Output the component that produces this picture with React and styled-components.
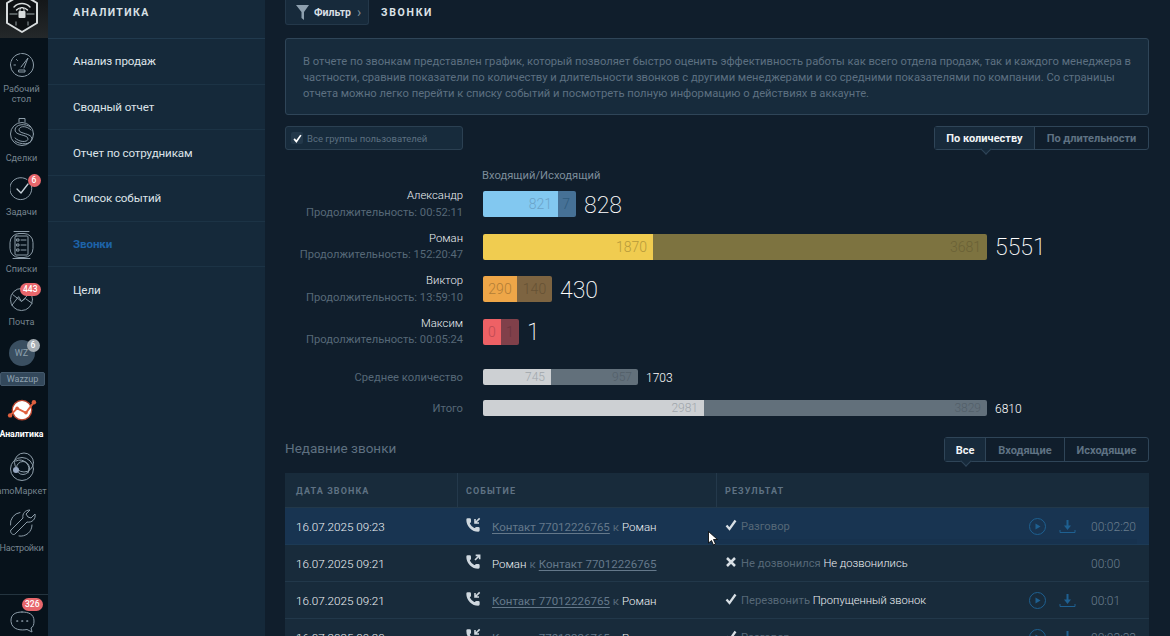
import React from 'react';
import styled, { createGlobalStyle } from 'styled-components';

const Global = createGlobalStyle`
  html, body { margin: 0; padding: 0; height: 636px; overflow: hidden; background: #101e2c; }
  body { font-family: Roboto, "Noto Sans", sans-serif; -webkit-font-smoothing: antialiased; }
  * { box-sizing: border-box; }
`;

const Page = styled.div`
  display: flex; width: 1170px; height: 636px; overflow: hidden; position: relative;
`;
const Rail = styled.nav`
  width: 48px; flex: none; background: #07121b; display: flex; flex-direction: column; height: 636px;
`;
const LogoBox = styled.div`
  height: 38px; background: linear-gradient(#141719, #24282a); display: flex; justify-content: center; align-items: flex-end;
  overflow: hidden; padding: 0 5px 2px 0;
`;
const RailItem = styled.div`
  height: ${p => p.$h}px; padding: ${p => p.$top ?? 12}px 5px 0 0; display: flex; flex-direction: column; align-items: center;
  position: relative;
`;
const RailIcon = styled.div`
  width: 30px; height: 30px; position: relative; color: #8d9da9; display: flex; align-items: center; justify-content: center; flex: none;
`;
const RailLabel = styled.div`
  font-size: ${p => p.$active ? 8.7 : 9.1}px; line-height: ${p => p.$lh || 11}px; margin-top: ${p => p.$gap || 5}px; text-align: center; white-space: nowrap;
  letter-spacing: ${p => p.$tight ? -0.25 : 0}px;
  color: ${p => p.$active ? '#ffffff' : '#76848f'}; font-weight: ${p => p.$active ? 700 : 400};
`;
const Badge = styled.span`
  position: absolute; top: ${p => p.$top ?? -5}px; right: ${p => p.$right ?? -4}px; height: 13px; min-width: 13px; padding: 0 3px;
  border-radius: 7px; background: ${p => p.$grey ? '#a5adb3' : '#e8676c'}; color: #fff; font-size: 8.5px; line-height: 13px; text-align: center; font-weight: 500;
`;
const Avatar = styled.div`
  width: 26px; height: 26px; border-radius: 50%; background: #3a4f61; color: #8da0ae; font-size: 9px; display: flex; align-items: center; justify-content: center;
`;
const TagLabel = styled.div`
  width: 45px; height: 14px; margin-top: 4px; border: 1px solid #44596c; border-radius: 2px; background: #33485b; color: #8ea0af;
  font-size: 9px; line-height: 12px; text-align: center; align-self: flex-start;
`;
const RailFoot = styled.div`
  margin-top: auto; border-top: 1px solid #24343f; height: 42px; display: flex; justify-content: center; padding: 12px 5px 0 0;
`;

const Menu = styled.aside`
  width: 217px; flex: none; background: #15293a; display: flex; flex-direction: column; height: 636px;
`;
const MenuHead = styled.div`
  height: 39px; padding: 0 25px 14px; display: flex; align-items: center; color: #d9e0e5; font-size: 10.5px; font-weight: 700; letter-spacing: 1.4px;
  border-bottom: 1px solid #213a4e;
`;
const MenuItem = styled.div`
  height: 45.7px; padding: 0 25px; display: flex; align-items: center; font-size: 11.6px; letter-spacing: -0.12px;
  color: ${p => p.$active ? '#1d63a8' : '#dde3e8'}; font-weight: ${p => p.$active ? 700 : 400};
  border-bottom: ${p => p.$last ? 'none' : '1px solid #1c3345'};
`;

const Main = styled.main`
  flex: 1; min-width: 0; background: #101e2c; padding: 0 21px 0 20px; height: 636px; overflow: hidden;
`;
const TopBar = styled.div`
  height: 26px; display: flex; align-items: flex-start; gap: 12px; margin-bottom: 12px;
`;
const FilterBtn = styled.div`
  width: 84px; height: 25px; background: #172a3b; border: 1px solid #24384a; border-top: none; border-radius: 0 0 3px 3px;
  display: flex; align-items: center; padding-left: 10px; gap: 5px; color: #d8dfe4; font-size: 10.5px; font-weight: 700;
`;
const Chevron = styled.span`
  color: #7e8d99; font-weight: 400; font-size: 14px; line-height: 14px; margin-left: 1px;
`;
const PageTitle = styled.h1`
  margin: 0; font-size: 10.5px; font-weight: 700; letter-spacing: 1.7px; color: #dde3e8; line-height: 25px;
`;
const Info = styled.div`
  height: 77px; background: #172b3c; border: 1px solid #2f4558; border-radius: 3px; padding: 15px 17px;
  color: #5d7081; font-size: 11.2px; line-height: 16px; white-space: nowrap;
`;
const ToolRow = styled.div`
  display: flex; justify-content: space-between; align-items: flex-start; margin-top: 11px; height: 24px;
`;
const CheckField = styled.label`
  width: 178px; height: 24px; background: #172b3c; border: 1px solid #2b4052; border-radius: 3px; display: flex; align-items: center;
  padding-left: 5px; gap: 4px; color: #5d7081; font-size: 9.5px;
`;
const CheckMark = styled.span`
  width: 12px; height: 12px; display: flex; align-items: center; justify-content: center; background: #23384a; border-radius: 2px; color: #fff;
`;
const Seg = styled.div`
  display: flex; height: ${p => p.$h}px; border: 1px solid #2f4558; border-radius: 3px;
`;
const SegBtn = styled.div`
  position: relative; width: ${p => p.$w}px; display: flex; align-items: center; justify-content: center; font-size: 11px; font-weight: 700; padding-top: 1px;
  color: ${p => p.$active ? '#f1f4f6' : '#5f7283'}; background: ${p => p.$active ? '#172a3b' : 'transparent'};
  &:not(:first-child) { border-left: 1px solid #2f4558; }
  ${p => p.$active && `&::after { content: ''; position: absolute; left: 50%; bottom: -4px; width: 7px; height: 7px; margin-left: -3px; background: #172a3b;
    border-right: 1px solid #2f4558; border-bottom: 1px solid #2f4558; transform: rotate(45deg); }`}
`;
const ChartHead = styled.div`
  padding: 19px 0 0 197px; height: 41px; color: #7d8d9a; font-size: 11.2px; line-height: 13px;
`;
const Row = styled.div`
  display: grid; grid-template-columns: 178px 1fr; column-gap: 20px; height: ${p => p.$h}px;
`;
const Who = styled.div`
  text-align: right; line-height: 16px; margin-top: -3px;
`;
const Name = styled.div`
  font-size: 11.3px; color: #eef1f4; font-weight: 300;
`;
const Dur = styled.div`
  font-size: 11.2px; color: #566877; white-space: nowrap; margin-top: 0.5px;
`;
const StatLabel = styled.div`
  text-align: right; font-size: 11.2px; color: #566877; line-height: 16px; padding-top: 1px;
`;
const BarLine = styled.div`
  display: flex; align-items: center; height: ${p => p.$h}px;
`;
const Part = styled.div`
  width: ${p => p.$w}px; height: 100%; background: ${p => p.$bg}; color: ${p => p.$fg};
  font-size: ${p => p.$small ? 12 : 14}px; font-weight: 300; display: flex; align-items: center; justify-content: ${p => p.$center ? 'center' : 'flex-end'};
  padding-right: ${p => p.$center ? 0 : 6}px; border-radius: ${p => p.$r};
  overflow: hidden;
`;
const Total = styled.div`
  margin: 2px 0 0 8px; color: #ffffff; font-weight: ${p => p.$small ? 300 : 200}; font-size: ${p => p.$small ? 12 : 23}px;
`;
const SectionHead = styled.div`
  display: flex; justify-content: space-between; align-items: center; margin-top: 6px; height: 25px;
`;
const SectionTitle = styled.h2`
  margin: 0 0 3px; color: #5e7080; font-weight: 400; font-size: 13.5px;
`;
const Table = styled.div`
  margin-top: 11px; background: #182b3b;
`;
const Grid = styled.div`
  position: relative; display: grid; grid-template-columns: 172px 259px 1fr; align-items: center;
  height: ${p => p.$h}px; background: ${p => p.$hl ? '#183451' : 'transparent'}; border-bottom: 1px solid ${p => p.$hl ? '#1c3a55' : '#22384a'};
`;
const HeadCell = styled.div`
  height: 100%; display: flex; align-items: center; padding: 1px 0 0 11px; color: #5f7283; font-size: 9px; font-weight: 700; letter-spacing: 1.1px;
  &:not(:first-child) { border-left: 1px solid #24394b; padding-left: 8px; }
`;
const DateCell = styled.div`
  padding: 2px 0 0 11px; color: #eef1f4; font-size: 11.7px; font-weight: 300;
`;
const EventCell = styled.div`
  padding: 2px 0 0 8px; display: flex; align-items: center; font-size: 11.5px; color: #56697a;
`;
const CallIcon = styled.span`
  width: 16px; height: 16px; margin-right: 11px; display: flex; color: #cfd8df; margin-top: -4px;
`;
const Lnk = styled.a`
  color: #64788a; text-decoration: underline; text-underline-offset: 2px;
`;
const Who2 = styled.span`
  color: #eef1f4; font-weight: 300;
`;
const Sep = styled.span`
  margin: 0 3px;
`;
const ResultCell = styled.div`
  display: flex; align-items: center; padding-left: 9px; font-size: 11.2px; color: #566877; position: relative; height: 100%;
`;
const Mark = styled.span`
  width: 12px; height: 12px; display: flex; color: #d8dfe5; margin-right: 4px; margin-top: -2px; flex: none;
`;
const ResultText = styled.span`
  margin-top: 0;
`;
const Actions = styled.div`
  margin-left: auto; display: flex; align-items: center; gap: 13px; color: #1e6091; padding: 1px 12px 0 0;
`;
const Time = styled.span`
  width: 46px; color: #6a7d8d; font-size: 12px; margin-left: 2px; font-weight: 300;
`;
const Progress = styled.div`
  position: absolute; left: 0; right: 12px; bottom: 0; height: 5px; background: #17324e;
`;
const Cursor = styled.svg`
  position: absolute; left: 708px; top: 531px; width: 10px; height: 15px;
`;

const stroke = { fill: 'none', stroke: 'currentColor', strokeWidth: 1, strokeLinecap: 'round', strokeLinejoin: 'round' };
const Logo = () => (
  <svg width="34" height="44" viewBox="0 0 34 44" style={{ flex: 'none' }}>
    <path d="M17 2 32 11V31L17 40 2 31V11Z" fill="#0d1013" stroke="#d8dcdd" strokeWidth="2" strokeLinejoin="round" />
    <g fill="none" stroke="#d8dcdd" strokeWidth="1.400" strokeLinecap="round">
      <path d="M9 15a11 11 0 0 1 16 0" />
      <path d="M11.500 18a7.500 7.500 0 0 1 11 0" />
      <path d="M5 22h7M22 22h7M11 33v-3M23 33v-3" stroke="#6d7578" />
    </g>
    <rect x="13.500" y="19" width="7" height="7" rx="1" fill="#d8dcdd" />
    <path d="M15 19v-1.500a2 2 0 0 1 4 0V19" fill="none" stroke="#d8dcdd" />
  </svg>
);
const Gauge = () => <svg width="26" height="26" viewBox="0 0 26 26" {...stroke}><circle cx="13" cy="13" r="11.500" strokeDasharray="12 1.200" /><path d="M12 15 19 6l-4 10" /><rect x="10" y="18" width="6" height="2" /><path d="M5 13h1.500M7.500 7.500l1 1" /></svg>;
const Dollar = () => <svg width="26" height="32" viewBox="0 0 26 32" {...stroke}><path d="M10 5V1.500h6V5" /><circle cx="13" cy="17" r="11.500" /><path d="M21 10c-4-4-15-3-15 3 0 6 13 4 13 9 0 3-8 4-13-1M22 13c-5-5-12-4-12 0 0 4 13 3 13 9 0 6-12 6-17 2" /></svg>;
const CheckCircle = () => <svg width="24" height="24" viewBox="0 0 24 24" {...stroke}><path d="M21.500 9A11 11 0 1 1 17 2.500" /><path d="m7 12 4 4 7-9" stroke="#c5d0d8" strokeWidth="1.300" /></svg>;
const ListIcon = () => <svg width="25" height="30" viewBox="0 0 25 30" {...stroke}><path d="M5 1.500h15M4 28.500h17" /><rect x="1" y="3.500" width="23" height="24" rx="9" /><rect x="6" y="6" width="13" height="19" rx="1" /><path d="M8 9h2v2H8zM8 14h2v2H8zM8 19h2v2H8zM12 10h5M12 15h5M12 20h5" /></svg>;
const MailIcon = () => <svg width="25" height="25" viewBox="0 0 26 26" {...stroke}><circle cx="13" cy="13" r="11.500" /><path d="m3 19 7-9 3 5 4-3 7 5M4 8l9 7 9-9" /></svg>;
const Analytic = () => <svg width="34" height="30" viewBox="0 0 34 30"><circle cx="17" cy="14" r="11" fill="#fff" stroke="#b9452f" strokeWidth="1.500" /><path d="M3.500 20 11.500 12l10 5 9-12" fill="none" stroke="#e0603f" strokeWidth="2.200" /><circle cx="3.500" cy="20" r="2.500" fill="#e0603f" /><circle cx="30.500" cy="5" r="2.500" fill="#e0603f" /><circle cx="11.500" cy="12" r="2" fill="#e0603f" /><circle cx="21.500" cy="17" r="2" fill="#e0603f" /></svg>;
const Market = () => <svg width="26" height="30" viewBox="0 0 26 30" {...stroke}><circle cx="13" cy="17" r="11.500" /><circle cx="15" cy="10.500" r="9.500" /><circle cx="14" cy="16" r="6.500" /><circle cx="7" cy="18" r="3" fill="#97a8c2" stroke="none" /><path d="M7 9a9 9 0 0 1 12 12" /></svg>;
const Wrench = () => <svg width="28" height="28" viewBox="0 0 28 28" {...stroke}><path d="M12 3.500A11 11 0 0 0 2.500 16M24 16a11 11 0 0 1-13 11" /><path d="M3 21 15 9C14 5 17 1 22 1l-4 4 2 3 3 1 4-4c1 5-3 9-8 8L7 25c-2 2-6-2-4-4Z" /></svg>;
const Chat = () => <svg width="26" height="24" viewBox="0 0 26 24" {...stroke}><path d="M13 2c6.500 0 12 2 12 9 0 4-1 6-3 7l1 4-5-2.500c-5 1-15 1-16-8C1.500 4 7 2 13 2Z" /><path d="M8 11h.5M13 11h.5M18 11h.5" strokeWidth="1.700" /></svg>;
const Funnel = () => <svg width="13" height="15" viewBox="0 0 13 15"><path d="M0 0h13L8 7V15L5.500 13V7Z" fill="#8ea0af" /></svg>;
const Tick = ({ s = 12 }) => <svg width={s} height={s} viewBox="0 0 12 12"><path d="M1.500 6.500 4.500 10 10.500 1.500" fill="none" stroke="currentColor" strokeWidth="2.300" /></svg>;
const Cross = () => <svg width="12" height="12" viewBox="0 0 12 12"><path d="M2 2l8 8M10 2l-8 8" fill="none" stroke="currentColor" strokeWidth="2.500" /></svg>;
const phone = 'M13.832 16.568a1 1 0 0 0 1.213-.303l.355-.465A2 2 0 0 1 17 15h3a2 2 0 0 1 2 2v3a2 2 0 0 1-2 2A18 18 0 0 1 2 4a2 2 0 0 1 2-2h3a2 2 0 0 1 2 2v3a2 2 0 0 1-.8 1.600l-.468.351a1 1 0 0 0-.292 1.233 14 14 0 0 0 6.392 6.384';
const CallSvg = ({ out }) => (
  <svg width="16" height="16" viewBox="0 0 24 24">
    <path d={phone} fill="currentColor" />
    {out
      ? <path d="M15 9l7-7M16 2h6v6" fill="none" stroke="currentColor" strokeWidth="2.400" />
      : <path d="M22 2l-7 7M15 3v6h6" fill="none" stroke="currentColor" strokeWidth="2.400" />}
  </svg>
);
const Play = () => <svg width="17" height="17" viewBox="0 0 17 17"><circle cx="8.500" cy="8.500" r="8" fill="none" stroke="currentColor" /><path d="M6.500 5.500v6l5-3Z" fill="currentColor" /></svg>;
const Download = () => <svg width="17" height="15" viewBox="0 0 17 15"><path d="M8.500 1v7" stroke="currentColor" strokeWidth="2" /><path d="M5 6.500h7L8.500 11Z" fill="currentColor" /><path d="M1 11v2.500h15V11" fill="none" stroke="currentColor" /></svg>;

const people = [
  { n: 'Александр', d: '00:52:11', a: [75, '821'], b: [18, '7'], t: '828', c: ['#82c8f0', '#6ba3c9', '#467196', '#2f5b7d'] },
  { n: 'Роман', d: '152:20:47', a: [170, '1870'], b: [334, '3681'], t: '5551', c: ['#f0cc50', '#b79a3b', '#7d7340', '#6a6136'] },
  { n: 'Виктор', d: '13:59:10', a: [34, '290', 1], b: [35, '140', 1], t: '430', c: ['#eea648', '#b27d36', '#7d6441', '#665235'] },
  { n: 'Максим', d: '00:05:24', a: [18, '0', 1], b: [18, '1', 1], t: '1', c: ['#ee6165', '#bd4a52', '#80404a', '#6b353e'] },
];
const stats = [
  { n: 'Среднее количество', a: [68, '745'], b: [87, '957'], t: '1703' },
  { n: 'Итого', a: [221, '2981'], b: [283, '3829'], t: '6810' },
];
const calls = [
  { date: '16.07.2025 09:23', out: false, ok: true, res: 'Разговор', time: '00:02:20', act: true, hl: true },
  { date: '16.07.2025 09:21', out: true, ok: false, res: 'Не дозвонился', extra: 'Не дозвонились', time: '00:00' },
  { date: '16.07.2025 09:21', out: false, ok: true, res: 'Перезвонить', extra: 'Пропущенный звонок', time: '00:01', act: true },
  { date: '16.07.2025 09:20', out: false, ok: true, res: 'Разговор', time: '00:03:33', act: true },
];
const menu = ['Анализ продаж', 'Сводный отчет', 'Отчет по сотрудникам', 'Список событий', 'Звонки', 'Цели'];

export default function App() {
  return (
    <Page>
      <Global />
      <Rail>
        <LogoBox><Logo /></LogoBox>
        <RailItem $h={68}><RailIcon><Gauge /></RailIcon><RailLabel $gap={4} $lh={10}>Рабочий<br />стол</RailLabel></RailItem>
        <RailItem $h={56}><RailIcon><Dollar /></RailIcon><RailLabel $gap={5}>Сделки</RailLabel></RailItem>
        <RailItem $h={56}><RailIcon><CheckCircle /><Badge $top={0} $right={-4}>6</Badge></RailIcon><RailLabel $gap={3}>Задачи</RailLabel></RailItem>
        <RailItem $h={54}><RailIcon><ListIcon /></RailIcon><RailLabel $gap={4}>Списки</RailLabel></RailItem>
        <RailItem $h={53}><RailIcon><MailIcon /><Badge $top={-1} $right={-4}>443</Badge></RailIcon><RailLabel $gap={3}>Почта</RailLabel></RailItem>
        <RailItem $h={59} $top={13}><RailIcon><Avatar>WZ</Avatar><Badge $grey $top={1} $right={-3}>6</Badge></RailIcon><TagLabel>Wazzup</TagLabel></RailItem>
        <RailItem $h={56}><RailIcon><Analytic /></RailIcon><RailLabel $active $gap={3}>Аналитика</RailLabel></RailItem>
        <RailItem $h={56}><RailIcon><Market /></RailIcon><RailLabel $gap={4}>amoМаркет</RailLabel></RailItem>
        <RailItem $h={58}><RailIcon><Wrench /></RailIcon><RailLabel $gap={5} $tight>Настройки</RailLabel></RailItem>
        <RailFoot><RailIcon><Chat /><Badge $top={-9} $right={-6}>326</Badge></RailIcon></RailFoot>
      </Rail>
      <Menu>
        <MenuHead>АНАЛИТИКА</MenuHead>
        {menu.map((m, i) => <MenuItem key={m} $active={m === 'Звонки'} $last={i === menu.length - 1}>{m}</MenuItem>)}
      </Menu>
      <Main>
        <TopBar>
          <FilterBtn><Funnel />Фильтр<Chevron>›</Chevron></FilterBtn>
          <PageTitle>ЗВОНКИ</PageTitle>
        </TopBar>
        <Info>
          В отчете по звонкам представлен график, который позволяет быстро оценить эффективность работы как всего отдела продаж, так и каждого менеджера в<br />
          частности, сравнив показатели по количеству и длительности звонков с другими менеджерами и со средними показателями по компании. Со страницы<br />
          отчета можно легко перейти к списку событий и посмотреть полную информацию о действиях в аккаунте.
        </Info>
        <ToolRow>
          <CheckField><CheckMark><Tick s={9} /></CheckMark>Все группы пользователей</CheckField>
          <Seg $h={24}>
            <SegBtn $w={99} $active>По количеству</SegBtn>
            <SegBtn $w={114}>По длительности</SegBtn>
          </Seg>
        </ToolRow>
        <ChartHead>Входящий/Исходящий</ChartHead>
        {people.map(p => (
          <Row key={p.n} $h={42.500}>
            <Who><Name>{p.n}</Name><Dur>Продолжительность: {p.d}</Dur></Who>
            <BarLine $h={26}>
              <Part $w={p.a[0]} $bg={p.c[0]} $fg={p.c[1]} $center={p.a[2]} $r="2px 0 0 2px">{p.a[1]}</Part>
              <Part $w={p.b[0]} $bg={p.c[2]} $fg={p.c[3]} $center={p.b[2]} $r="0 2px 2px 0">{p.b[1]}</Part>
              <Total>{p.t}</Total>
            </BarLine>
          </Row>
        ))}
        <Row $h={8} />
        {stats.map(s => (
          <Row key={s.n} $h={31}>
            <StatLabel>{s.n}</StatLabel>
            <BarLine $h={16}>
              <Part $small $w={s.a[0]} $bg="#cdd0d3" $fg="#a0a6ab" $r="2px 0 0 2px">{s.a[1]}</Part>
              <Part $small $w={s.b[0]} $bg="#62707b" $fg="#525f69" $r="0 2px 2px 0">{s.b[1]}</Part>
              <Total $small>{s.t}</Total>
            </BarLine>
          </Row>
        ))}
        <SectionHead>
          <SectionTitle>Недавние звонки</SectionTitle>
          <Seg $h={25}>
            <SegBtn $w={40} $active>Все</SegBtn>
            <SegBtn $w={79}>Входящие</SegBtn>
            <SegBtn $w={84}>Исходящие</SegBtn>
          </Seg>
        </SectionHead>
        <Table>
          <Grid $h={35}>
            <HeadCell>ДАТА ЗВОНКА</HeadCell>
            <HeadCell>СОБЫТИЕ</HeadCell>
            <HeadCell>РЕЗУЛЬТАТ</HeadCell>
          </Grid>
          {calls.map((c, i) => (
            <Grid key={i} $h={37} $hl={c.hl}>
              <DateCell>{c.date}</DateCell>
              <EventCell>
                <CallIcon><CallSvg out={c.out} /></CallIcon>
                {c.out
                  ? <><Who2>Роман</Who2><Sep>к</Sep><Lnk>Контакт 77012226765</Lnk></>
                  : <><Lnk>Контакт 77012226765</Lnk><Sep>к</Sep><Who2>Роман</Who2></>}
              </EventCell>
              <ResultCell>
                <Mark>{c.ok ? <Tick /> : <Cross />}</Mark>
                <ResultText>{c.res}{c.extra && <Who2> {c.extra}</Who2>}</ResultText>
                <Actions>
                  {c.act && <Play />}
                  {c.act && <Download />}
                  <Time>{c.time}</Time>
                </Actions>
                {c.hl && <Progress />}
              </ResultCell>
            </Grid>
          ))}
        </Table>
      </Main>
      <Cursor viewBox="0 0 10 15"><path d="M.5.500v11.500l3-2.500 2 4.500 2-1-2-4.500h4Z" fill="#fff" stroke="#000" strokeWidth=".8" /></Cursor>
    </Page>
  );
}
